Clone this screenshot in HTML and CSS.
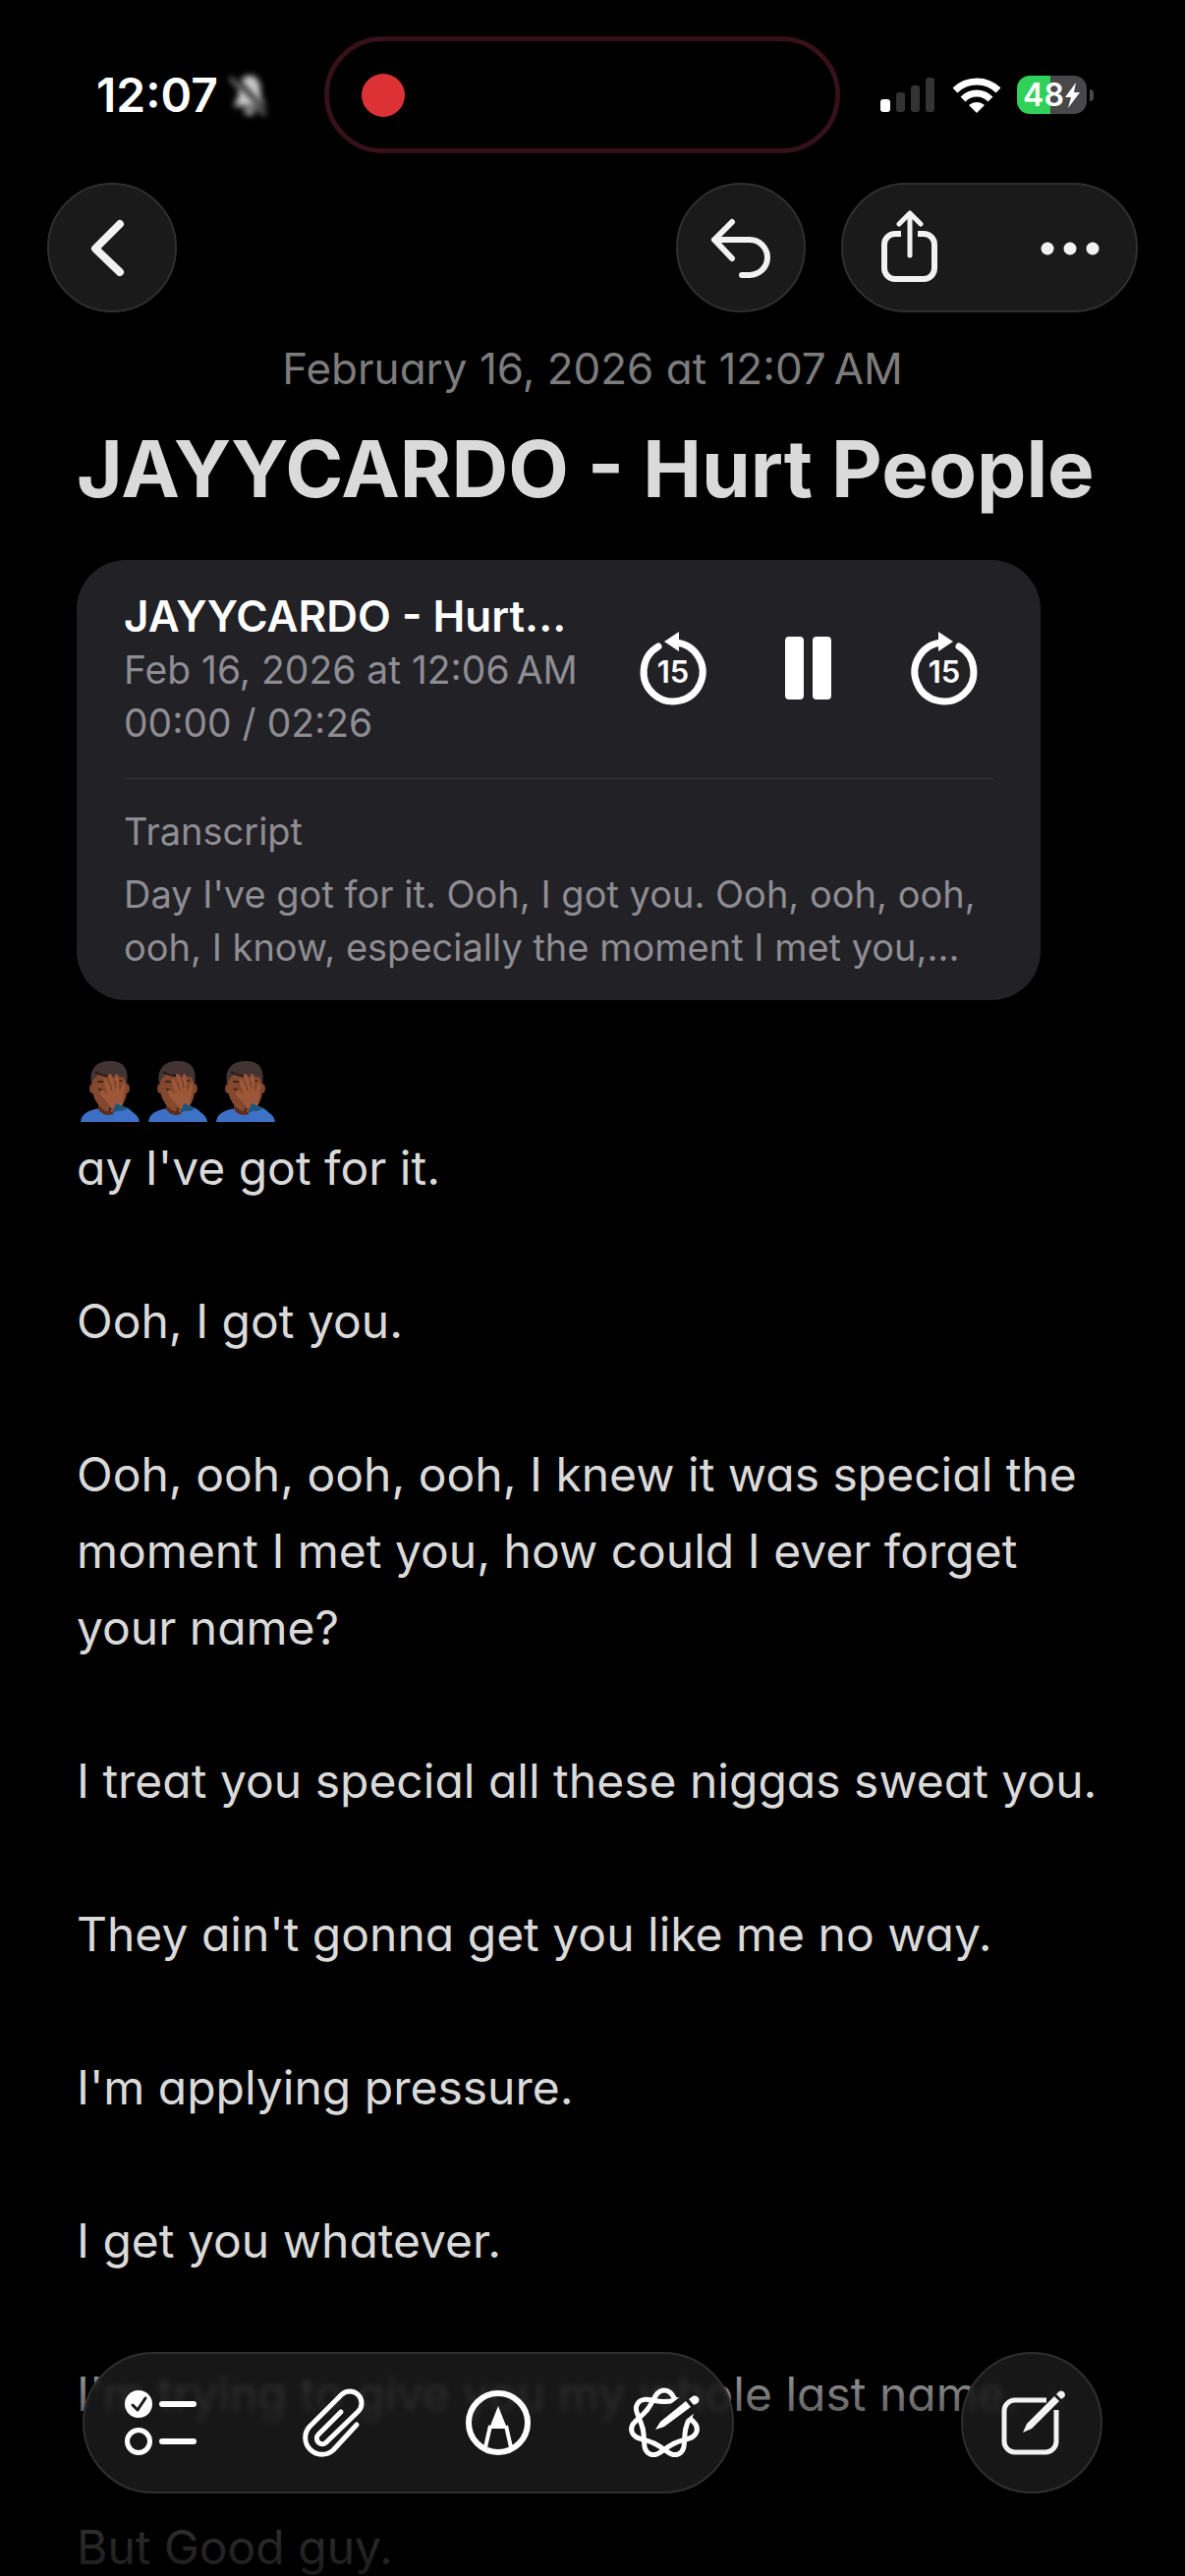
FILE: index.html
```html
<!DOCTYPE html>
<html lang="en">

<head>
    <meta charset="UTF-8">
    <meta name="viewport" content="width=device-width, initial-scale=1.0">
    <title>JAYYCARDO - Hurt People</title>
    <link rel="stylesheet" href="styles.css">
</head>

<body>
    <div class="status-bar">
        <div class="status-left">
            <span>12:07</span>
            <svg class="bell" width="44" height="48" viewBox="0 0 44 48" aria-hidden="true">
                <path d="M22 4C14 4 11 11 11 19c0 9-3 12-6 16h34c-3-4-6-7-6-16 0-8-3-15-11-15z" fill="#ccc"/>
                <path d="M16 38a6 6 0 0 0 12 0z" fill="#ccc"/>
                <path d="M6 5l34 38" stroke="#000" stroke-width="5"/>
                <path d="M2 6l36 38" stroke="#aaa" stroke-width="3"/>
            </svg>
        </div>
        <div class="island"><span class="record-dot"></span></div>
        <div class="status-right">
            <svg width="56" height="36" viewBox="0 0 56 36" aria-hidden="true">
                <rect x="0" y="22" width="10" height="13" rx="3" fill="#fff"/>
                <rect x="16" y="15" width="9" height="20" rx="3" fill="#333"/>
                <rect x="31" y="8" width="9" height="27" rx="3" fill="#333"/>
                <rect x="46" y="0" width="9" height="35" rx="3" fill="#333"/>
            </svg>
            <svg width="50" height="36" viewBox="0 0 50 36" aria-hidden="true">
                <g fill="none" stroke="#fff" stroke-width="7">
                    <path d="M3 13C15 1 35 1 47 13"/>
                    <path d="M11 22c8-8 20-8 28 0"/>
                </g>
                <path d="M17 28c5-4 11-4 16 0l-8 8z" fill="#fff"/>
            </svg>
            <div class="battery">
                <div class="battery-body">
                    <span>48</span>
                    <svg width="17" height="26" viewBox="0 0 17 26" aria-hidden="true">
                        <path d="M12 0L1 15h6L4 26 16 10h-6z" fill="#fff"/>
                    </svg>
                </div>
                <span class="battery-tip"></span>
            </div>
        </div>
    </div>

    <header class="header">
        <button class="glass round" aria-label="Back">
            <svg class="icon" viewBox="0 0 80 80">
                <path d="M48 16L23 41l25 24" stroke-width="8"/>
            </svg>
        </button>
        <button class="glass round undo" aria-label="Undo">
            <svg class="icon" viewBox="0 0 80 80">
                <path d="M31 14L13 32l18 19M13 32h36a18 18 0 0 1 0 36h-8" stroke-width="6"/>
            </svg>
        </button>
        <div class="glass header-group">
            <button aria-label="Share">
                <svg class="icon" viewBox="0 0 80 80">
                    <path d="M32 26h-6a11 11 0 0 0-11 11v24a11 11 0 0 0 11 11h29a11 11 0 0 0 11-11V37a11 11 0 0 0-11-11h-6" stroke-width="6" stroke-linecap="butt"/>
                    <path d="M41 6v42M30 16L41 5l11 11" stroke-width="5"/>
                </svg>
            </button>
            <button aria-label="More">
                <svg class="icon" viewBox="0 0 80 80">
                    <g fill="#f2f2f2" stroke="none">
                        <circle cx="17" cy="41" r="6.5"/>
                        <circle cx="40" cy="41" r="6.5"/>
                        <circle cx="63" cy="41" r="6.5"/>
                    </g>
                </svg>
            </button>
        </div>
    </header>

    <main class="note">
        <p class="note-date">February 16, 2026 at 12:07&#8239;AM</p>
        <h1>JAYYCARDO - Hurt People</h1>

        <section class="audio-card">
            <div class="audio-top">
                <div class="audio-info">
                    <h2>JAYYCARDO - Hurt...</h2>
                    <p>Feb 16, 2026 at 12:06&#8239;AM</p>
                    <p>00:00 / 02:26</p>
                </div>
                <div class="audio-controls">
                    <button aria-label="Back 15 seconds">
                        <svg class="icon" viewBox="0 0 80 80">
                            <path d="M42 13A30 30 0 1 1 25 17" stroke-width="7"/>
                            <path d="M31 12L46 2v20z" fill="#fff" stroke="none"/>
                            <text x="40" y="54">15</text>
                        </svg>
                    </button>
                    <button aria-label="Pause">
                        <svg class="icon" viewBox="0 0 80 80">
                            <rect x="16" y="7" width="19" height="64" rx="4" fill="#fff" stroke="none"/>
                            <rect x="44" y="7" width="19" height="64" rx="4" fill="#fff" stroke="none"/>
                        </svg>
                    </button>
                    <button aria-label="Forward 15 seconds">
                        <svg class="icon" viewBox="0 0 80 80">
                            <path d="M38 13A30 30 0 1 0 55 17" stroke-width="7"/>
                            <path d="M49 12L34 2v20z" fill="#fff" stroke="none"/>
                            <text x="40" y="54">15</text>
                        </svg>
                    </button>
                </div>
            </div>
            <div class="transcript">
                <h3>Transcript</h3>
                <p>Day I've got for it. Ooh, I got you. Ooh, ooh, ooh,<br>ooh, I know, especially the moment I met you,...</p>
            </div>
        </section>

        <div class="note-body">
            <div class="emoji-line" role="img" aria-label="Three facepalms">
                <svg width="60" height="62" viewBox="0 0 60 62">
                    <g id="facepalm">
                        <path d="M0 62c1-9 8-12 20-14h19c13 2 20 6 21 14z" fill="#3d6fc4"/>
                        <path d="M18 40h15v14c-6 2-11 1-15-5z" fill="#5e2c1b"/>
                        <ellipse cx="12" cy="28" rx="3" ry="5" fill="#7c452d"/>
                        <ellipse cx="47" cy="28" rx="3" ry="5" fill="#7c452d"/>
                        <path d="M12 16C12 6 47 6 47 18v12c0 13-9 22-16 22-9 0-19-12-19-24z" fill="#84482f"/>
                        <path d="M11 24C8 7 17 0 30 0s20 7 17 24l-3-8c-8 1-15 0-21-3-5 0-8 3-10 6z" fill="#433434"/>
                        <path d="M15 11c5 3 9 4 13 4" stroke="#241714" stroke-width="2" fill="none"/>
                        <path d="M17 21h7M37 20h5M18 29c2-1 3 0 4 1" stroke="#45241a" stroke-width="2" fill="none"/>
                        <path d="M20 30l11 16-2 6" stroke="#45241a" stroke-width="2" fill="none"/>
                        <path d="M31 48c-4-7-13-14-11-18 2-2 5 2 8 4-2-6-4-10-5-15 1-2 3-1 4 1l4 8-3-14c1-2 3-1 4 1l3 10v-11c2-2 3 0 4 2l1 14 3-7c2-1 3 1 2 4l-3 21z" fill="#9c5838"/>
                        <path d="M32 30l-2-8M36 28l-1-8M40 30v-6" stroke="#6e3a25" fill="none"/>
                        <path d="M34 48l3-5 11 5c5 3 9 8 11 14H36c-2-5-3-9-2-14z" fill="#3d72c6"/>
                        <path d="M32 54l4-11 12 5-6 3c-4-1-7 0-10 3z" fill="#1e5578"/>
                    </g>
                </svg>
                <svg width="60" height="62" viewBox="0 0 60 62"><use href="#facepalm"/></svg>
                <svg width="60" height="62" viewBox="0 0 60 62"><use href="#facepalm"/></svg>
            </div>
            <p>ay I've got for it.</p>
            <p>Ooh, I got you.</p>
            <p>Ooh, ooh, ooh, ooh, I knew it was special the moment I met you, how could I ever forget your name?</p>
            <p>I treat you special all these niggas sweat you.</p>
            <p>They ain't gonna get you like me no way.</p>
            <p>I'm applying pressure.</p>
            <p>I get you whatever.</p>
            <p>I'm trying to give you my whole last name.</p>
            <p>But Good guy.</p>
        </div>
    </main>

    <footer class="bottom-bar">
        <div class="glass tools">
            <button aria-label="Checklist">
                <svg class="icon" viewBox="0 0 80 80">
                    <circle cx="18" cy="21" r="14" fill="#fff" stroke="none"/>
                    <path d="M12 22l5 5 8-12" stroke="#1a1a1a" stroke-width="3"/>
                    <circle cx="18" cy="59" r="11.5" stroke-width="5"/>
                    <path d="M42 21h32M42 59h32" stroke-width="6"/>
                </svg>
            </button>
            <button aria-label="Attach">
                <svg class="icon" viewBox="0 0 80 80">
                    <path d="M69 42L45 68A17 17 0 0 1 21 44L53.500 11.500A12 12 0 0 1 70.500 28.500L38 60A5.500 5.500 0 0 1 30 52L53 29" stroke-width="5"/>
                </svg>
            </button>
            <button aria-label="Markup">
                <svg class="icon" viewBox="0 0 80 80">
                    <circle cx="42" cy="40" r="30" stroke-width="6"/>
                    <path d="M42 23l8 20v3H34v-3z" fill="#fff" stroke="none"/>
                    <path d="M34 43l-5 22M50 43l5 22" stroke-width="4" stroke-linecap="butt"/>
                </svg>
            </button>
            <button aria-label="Writing tools">
                <svg class="icon" viewBox="0 0 80 80">
                    <mask id="pencilGap">
                        <rect width="80" height="80" fill="#fff"/>
                        <path d="M44 37l40-31" stroke="#000" stroke-width="22" stroke-linecap="butt"/>
                    </mask>
                    <g mask="url(#pencilGap)">
                        <g transform="translate(40 41)" stroke-width="5">
                            <path id="lobe" d="M-17.500-14C-10-23.400-9-34 0-34S10-23.400 17.500-14"/>
                            <use href="#lobe" transform="rotate(51.430)"/>
                            <use href="#lobe" transform="rotate(102.860)"/>
                            <use href="#lobe" transform="rotate(154.290)"/>
                            <use href="#lobe" transform="rotate(205.710)"/>
                            <use href="#lobe" transform="rotate(257.140)"/>
                            <use href="#lobe" transform="rotate(308.570)"/>
                        </g>
                    </g>
                    <path d="M31 47l5-8 26-21 5 6-27 20z" fill="#fff" stroke="none"/>
                    <path d="M65 16l5 6 4-2c4-4-1-9-5-7z" fill="#fff" stroke="none"/>
                </svg>
            </button>
        </div>
        <button class="glass round-large" aria-label="New note">
            <svg class="icon" viewBox="0 0 80 80">
                <path d="M55 17H23a11 11 0 0 0-11 11v31a11 11 0 0 0 11 11h31a11 11 0 0 0 11-11V27" stroke-width="5" stroke-linecap="butt"/>
                <path d="M53 7h20v20z" fill="#1a1a1a" stroke="none"/>
                <path d="M31 50l4-9 28-28 5 5-28 28z" fill="#f2f2f2" stroke="none"/>
                <path d="M65 11l5 5 3-2c3-4-2-8-5-6z" fill="#f2f2f2" stroke="none"/>
            </svg>
        </button>
    </footer>
</body>

</html>
```
FILE: styles.css
```css
* {
    box-sizing: border-box;
    margin: 0;
    padding: 0;
}

body {
    font-family: Inter, 'Liberation Sans', sans-serif;
    background-color: #000;
    color: #dadada;
    height: 100vh;
    overflow: hidden;
}

button {
    background: none;
    border: none;
    color: inherit;
    font-family: inherit;
    cursor: pointer;
    display: flex;
    justify-content: center;
    align-items: center;
}

svg {
    display: block;
    flex: none;
}

.icon {
    width: 80px;
    height: 80px;
    fill: none;
    stroke: #f2f2f2;
    stroke-linecap: round;
    stroke-linejoin: round;
}

/* Status bar */
.status-bar {
    display: flex;
    align-items: center;
    padding: 37px 93px 30px 98px;
    color: #fff;
}

.status-left {
    display: flex;
    align-items: center;
    gap: 10px;
    width: 232px;
    font-size: 48px;
    line-height: 60px;
    font-weight: 600;
}

.bell {
    filter: blur(3px);
}

.island {
    flex: 1;
    height: 119px;
    display: flex;
    align-items: center;
    padding-left: 33px;
    border: 5px solid #36101a;
    border-radius: 60px;
}

.record-dot {
    width: 44px;
    height: 44px;
    border-radius: 50%;
    background-color: #dc3236;
}

.status-right {
    display: flex;
    align-items: center;
    justify-content: space-between;
    width: 258px;
    padding-left: 41px;
}

.battery {
    display: flex;
    align-items: center;
    gap: 3px;
}

.battery-body {
    display: flex;
    align-items: center;
    justify-content: center;
    width: 71px;
    height: 39px;
    border-radius: 13px;
    background: linear-gradient(to right, #30d158 48%, #48484a 48%);
    font-size: 32px;
    line-height: 39px;
    font-weight: 600;
}

.battery-tip {
    width: 4px;
    height: 12px;
    border-radius: 0 4px 4px 0;
    background-color: #48484a;
}

/* Navigation */
.glass {
    background-color: #1a1a1a;
    border: 2px solid #2f2f2f;
    border-radius: 72px;
}

.header {
    display: flex;
    gap: 36px;
    padding: 0 48px;
}

.round {
    width: 132px;
    height: 132px;
}

.undo {
    margin-left: auto;
}

.header-group {
    display: flex;
    align-items: center;
    gap: 84px;
    padding: 0 27px;
}

/* Note */
.note {
    padding: 29px 78px 0;
}

.note-date {
    font-size: 44px;
    line-height: 56px;
    text-align: center;
    color: #7c7c7c;
    font-feature-settings: 'cv11';
}

h1 {
    margin-top: 26px;
    font-size: 80px;
    line-height: 96px;
    font-weight: 700;
    white-space: nowrap;
}

.audio-card {
    margin-top: 45px;
    margin-right: 69px;
    padding: 29px 48px 27px;
    border-radius: 50px;
    background-color: #222126;
    color: #8e8d93;
    font-size: 38px;
    line-height: 54px;
}

.audio-top {
    display: flex;
    justify-content: space-between;
    align-items: center;
    padding-bottom: 29px;
    border-bottom: 1px solid #38373c;
}

.audio-info {
    font-size: 39px;
    white-space: nowrap;
}

.audio-info h2 {
    font-size: 44px;
    line-height: 56px;
    font-weight: 600;
    color: #fff;
}

.audio-controls {
    display: flex;
    gap: 58px;
    padding-right: 10px;
}

.audio-controls .icon {
    stroke: #fff;
}

.audio-controls text {
    fill: #fff;
    stroke: none;
    font-size: 31px;
    font-weight: 600;
    text-anchor: middle;
}

.transcript {
    padding-top: 26px;
    white-space: nowrap;
}

.transcript h3 {
    margin-bottom: 10px;
    font-size: 38px;
    font-weight: 400;
}

.note-body {
    margin-top: 54px;
    font-size: 48px;
    line-height: 78px;
    font-feature-settings: 'cv11';
}

.note-body p + p {
    margin-top: 78px;
}

.emoji-line {
    display: flex;
    align-items: center;
    gap: 9px;
    height: 78px;
    padding-left: 4px;
}

/* Bottom toolbar, note text fades out below it */
.bottom-bar {
    position: fixed;
    left: 0;
    right: 0;
    bottom: 0;
    display: flex;
    justify-content: space-between;
    padding: 34px 84px 84px;
    background: linear-gradient(to bottom, transparent, rgba(0, 0, 0, 0.6) 40%, rgba(0, 0, 0, 0.88));
}

.bottom-bar .glass {
    height: 144px;
    background-color: rgba(28, 28, 28, 0.82);
    backdrop-filter: blur(3px);
}

.tools {
    display: flex;
    align-items: center;
    gap: 91px;
    padding: 0 29px 0 37px;
}

.tools .icon {
    stroke: #fff;
}

.round-large {
    width: 144px;
}
```
